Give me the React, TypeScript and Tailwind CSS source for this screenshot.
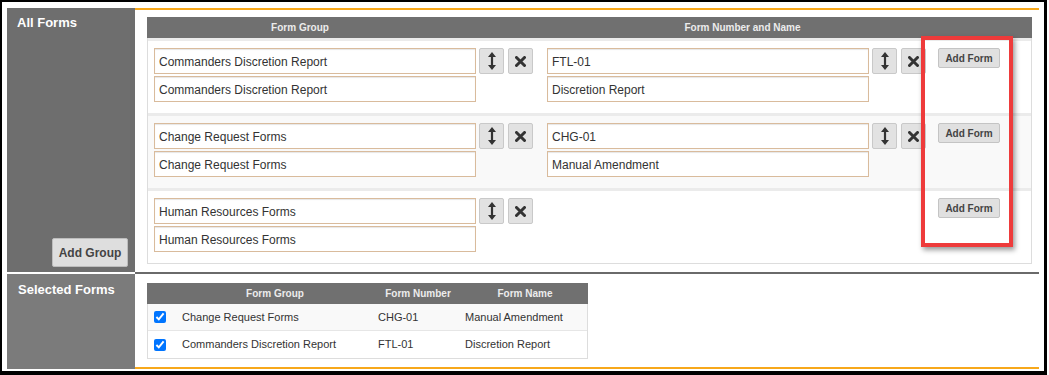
import React from "react";

const UpDown = () => (
  <svg width="8" height="18" viewBox="0 0 8 18">
    <path d="M4 0 L8 5 H5.1 V13 H8 L4 18 L0 13 H2.9 V5 H0 Z" fill="#333" />
  </svg>
);

const Times = () => (
  <svg width="11" height="11" viewBox="0 0 11 11">
    <path d="M1.5 1.5 L9.5 9.5 M9.5 1.5 L1.5 9.5" stroke="#333" strokeWidth="3" strokeLinecap="round" />
  </svg>
);

const Input = ({ value }: { value: string }) => (
  <div className="h-[26px] w-[322px] border border-[#d9bb9c] bg-white px-[4px] pt-px flex items-center text-[12px] text-[#333] shadow-[inset_0_1px_1px_rgba(0,0,0,0.1)] whitespace-nowrap">
    {value}
  </div>
);

const IconBtn = ({ children }: { children: React.ReactNode }) => (
  <div className="h-[26px] w-[25px] rounded-[2px] border border-[#c9c9c9] bg-[#e2e2e2] flex items-center justify-center">
    {children}
  </div>
);

const AddForm = () => (
  <div className="h-[20px] w-[62px] rounded-[2px] border border-[#c4c4c4] bg-[#e0e0e0] flex items-center justify-center text-[10px] font-bold text-[#444]">
    Add Form
  </div>
);

type Row = { group: string; num?: string; name?: string; bg: string };

const rows: Row[] = [
  { group: "Commanders Discretion Report", num: "FTL-01", name: "Discretion Report", bg: "bg-white" },
  { group: "Change Request Forms", num: "CHG-01", name: "Manual Amendment", bg: "bg-[#f9f9f9]" },
  { group: "Human Resources Forms", bg: "bg-white" },
];

const selected = [
  { group: "Change Request Forms", num: "CHG-01", name: "Manual Amendment", bg: "bg-[#f9f9f9]" },
  { group: "Commanders Discretion Report", num: "FTL-01", name: "Discretion Report", bg: "bg-white" },
];

export default function App() {
  return (
    <div className="relative w-[1049px] h-[375px] bg-white overflow-hidden font-['Liberation_Sans',Arial,sans-serif]">
      <div className="w-[1047px] h-[375px] border-t-2 border-l-2 border-r-[3px] border-b-[4px] border-black bg-white pt-[6px] px-[5px]">
        {/* Section 1 */}
        <div className="flex h-[264px]">
          <div className="w-[128px] bg-[#6e6e6e] flex flex-col justify-between pl-[10px] pt-[7px] pr-[7px] pb-[5px]">
            <div className="text-[13px] font-bold text-white leading-[16px]">All Forms</div>
            <div className="self-end h-[29px] w-[76px] rounded-[2px] border border-[#bdbdbd] bg-[#dedede] flex items-center justify-center text-[12px] font-bold text-[#444]">
              Add Group
            </div>
          </div>
          <div className="flex-1 border-t-2 border-[#f7a81b] pt-[7px] pl-[12px] pr-[7px]">
            <div className="border-x border-b border-[#dddddd]">
              <div className="h-[21px] bg-[#707070] flex items-center text-[10px] font-bold text-[#ececec] -mx-px">
                <div className="w-[306px] text-center">Form Group</div>
                <div className="flex-1 text-center">Form Number and Name</div>
              </div>
              {rows.map((r, i) => (
                <div key={i} className={`border-t-[3px] border-[#ebebeb] ${r.bg} h-[75px] pt-[7px] pl-[6px] flex items-start`}>
                  <div className="flex flex-col gap-[2px]">
                    <Input value={r.group} />
                    <Input value={r.group} />
                  </div>
                  <div className="ml-[3px]">
                    <IconBtn>
                      <UpDown />
                    </IconBtn>
                  </div>
                  <div className="ml-[4px]">
                    <IconBtn>
                      <Times />
                    </IconBtn>
                  </div>
                  <div className="ml-[14px] w-[380px] flex items-start">
                    {r.num && (
                      <>
                        <div className="flex flex-col gap-[2px]">
                          <Input value={r.num} />
                          <Input value={r.name || ""} />
                        </div>
                        <div className="ml-[3px]">
                          <IconBtn>
                            <UpDown />
                          </IconBtn>
                        </div>
                        <div className="ml-[4px]">
                          <IconBtn>
                            <Times />
                          </IconBtn>
                        </div>
                      </>
                    )}
                  </div>
                  <div className="ml-[11px]">
                    <AddForm />
                  </div>
                </div>
              ))}
            </div>
          </div>
        </div>

        {/* Separator */}
        <div className="flex h-[2px]">
          <div className="w-[128px] bg-white" />
          <div className="flex-1 bg-[#6a6a6a]" />
        </div>

        {/* Section 2 */}
        <div className="flex h-[95px]">
          <div className="w-[128px] bg-[#7b7b7b] pl-[11px] pt-[8px]">
            <div className="text-[13px] font-bold text-white leading-[16px]">Selected Forms</div>
          </div>
          <div className="flex-1 border-b-2 border-[#f7a81b] pt-[9px] pl-[12px]">
            <div className="w-[441px] border-x border-b border-[#dddddd]">
              <div className="h-[21px] bg-[#707070] flex items-center text-[10px] font-bold text-[#ececec] -mx-px">
                <div className="w-[29px]" />
                <div className="w-[198px] text-center">Form Group</div>
                <div className="w-[88px] text-center">Form Number</div>
                <div className="flex-1 text-center">Form Name</div>
              </div>
              {selected.map((s, i) => (
                <div key={i} className={`h-[27px] flex items-center text-[11px] text-[#333] ${s.bg} ${i === 0 ? "border-b border-[#e6e6e6]" : ""}`}>
                  <div className="w-[28px] pl-[6px] flex items-center">
                    <input type="checkbox" checked readOnly className="w-[12px] h-[12px] m-0 accent-[#0075ff]" />
                  </div>
                  <div className="w-[198px] pl-[6px] whitespace-nowrap">{s.group}</div>
                  <div className="w-[88px] pl-[4px]">{s.num}</div>
                  <div className="flex-1 pl-[3px]">{s.name}</div>
                </div>
              ))}
            </div>
          </div>
        </div>
      </div>

      {/* Red annotation box */}
      <div className="absolute left-[921px] top-[36px] w-[92px] h-[211px] border-[4px] border-[#ee3b3b] shadow-[2px_3px_5px_rgba(0,0,0,0.4)]" />
    </div>
  );
}
